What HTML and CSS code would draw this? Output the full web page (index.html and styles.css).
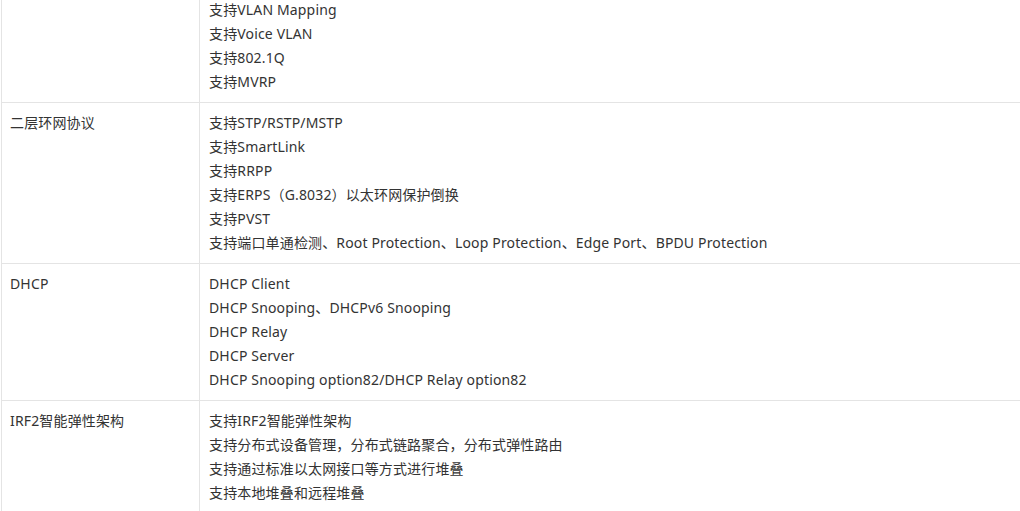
FILE: index.html
```html
<!DOCTYPE html>
<html lang="zh-CN">
<head>
<meta charset="utf-8">
<title>规格</title>
<link rel="stylesheet" href="styles.css">
</head>
<body>
<table class="spec">
  <tbody>
    <tr>
      <td class="name">VLAN</td>
      <td class="desc">
        <p>支持基于端口的VLAN</p>
        <p>支持基于MAC的VLAN</p>
        <p>支持基于协议的VLAN</p>
        <p>支持QinQ，灵活QinQ</p>
        <p>支持VLAN Mapping</p>
        <p>支持Voice VLAN</p>
        <p>支持802.1Q</p>
        <p>支持MVRP</p>
      </td>
    </tr>
    <tr>
      <td class="name">二层环网协议</td>
      <td class="desc">
        <p>支持STP/RSTP/MSTP</p>
        <p>支持SmartLink</p>
        <p>支持RRPP</p>
        <p>支持ERPS（G.8032）以太环网保护倒换</p>
        <p>支持PVST</p>
        <p>支持端口单通检测、Root Protection、Loop Protection、Edge Port、BPDU Protection</p>
      </td>
    </tr>
    <tr>
      <td class="name">DHCP</td>
      <td class="desc">
        <p>DHCP Client</p>
        <p>DHCP Snooping、DHCPv6 Snooping</p>
        <p>DHCP Relay</p>
        <p>DHCP Server</p>
        <p>DHCP Snooping option82/DHCP Relay option82</p>
      </td>
    </tr>
    <tr>
      <td class="name">IRF2智能弹性架构</td>
      <td class="desc">
        <p>支持IRF2智能弹性架构</p>
        <p>支持分布式设备管理，分布式链路聚合，分布式弹性路由</p>
        <p>支持通过标准以太网接口等方式进行堆叠</p>
        <p>支持本地堆叠和远程堆叠</p>
      </td>
    </tr>
  </tbody>
</table>
</body>
</html>
```

FILE: styles.css
```css
html, body {
  margin: 0;
  padding: 0;
  background: #ffffff;
  overflow: hidden;
}

body {
  font-family: "Noto Sans", "Noto Sans CJK SC", sans-serif;
  font-size: 14px;
  line-height: 24px;
  letter-spacing: 0.15px;
  color: #333333;
}

.spec {
  border-collapse: collapse;
  width: 1100px;
  margin: -107px 0 0 1px;
  table-layout: fixed;
}

.spec td {
  border: 1px solid #e4e4e4;
  vertical-align: top;
  padding: 8px 9px 8px 8px;
}

.spec td.name {
  width: 180px;
}

.spec td.desc {
  padding-left: 9px;
}

.spec p {
  margin: 0;
  white-space: nowrap;
}
```
